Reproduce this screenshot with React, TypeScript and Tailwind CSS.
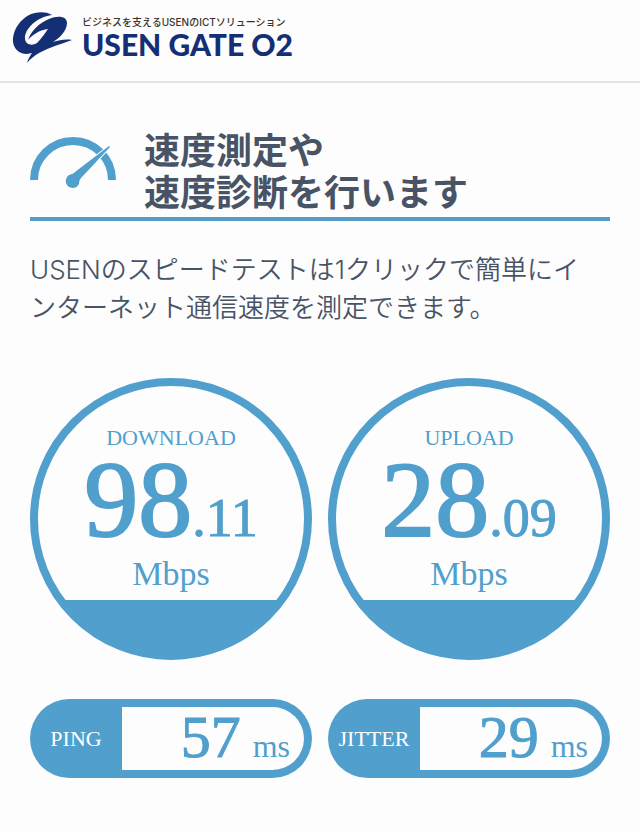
type SpeedDialProps = {
  label: string;
  whole: string;
  decimal: string;
};

type LatencyPillProps = {
  label: string;
  value: string;
};

const Logo: React.FC = () => (
  <a href="#top" className="flex items-start gap-2 text-[#142f75]">
    <svg width="60" height="52" viewBox="0 0 60 52" fill="currentColor" aria-hidden="true">
      <path d="M40 3 C33 -1 24 0 17 3 C8 8 2 17 1 26 C0 35 6 42 15 42 L20 41 C18 44 16 47 15 51 C18 47 22 44 27 41 C38 35 49 32 60 28 C54 27 47 28 41 30 C49 25 55 18 55 11 C55 4 46 3 37 7 C27 11 19 19 16 28 C21 22 28 18 36 17 C33 21 30 26 26 30 C22 34 14 34 13 27 C12 18 24 5 40 3 Z" />
    </svg>
    <span className="flex flex-col pt-1 pl-0.5">
      <span className="font-['Inter','Noto_Sans_CJK_JP',sans-serif] text-[10px] leading-[12px] font-medium text-[#38332f]">
        ビジネスを支えるUSENのICTソリューション
      </span>
      <span className="font-['Lato',sans-serif] text-[30px] leading-[32px] font-black">
        USEN GATE O2
      </span>
    </span>
  </a>
);

const GaugeIcon: React.FC = () => (
  <svg width="86" height="52" viewBox="0 0 86 52" className="shrink-0" aria-hidden="true">
    <path d="M4 43 A39 39 0 0 1 82 43" fill="none" stroke="#509fcd" strokeWidth="8" />
    <path
      d="M80 10 L79 9 L45 35 C43 37 41 37 39 38 A7 7 0 1 0 49 47 C49 44 50 42 51 41 Z"
      fill="#509fcd"
      stroke="#fdfdfd"
      strokeWidth="2"
      paintOrder="stroke"
    />
  </svg>
);

const SpeedDial: React.FC<SpeedDialProps> = ({ label, whole, decimal }) => (
  <div className="flex aspect-square flex-col items-center rounded-full border-8 border-[#509fcd] bg-[linear-gradient(to_top,#509fcd_60px,#fdfdfd_60px)] bg-origin-border pt-10 text-[#509fcd]">
    <p className="text-[22px] leading-[24px]">{label}</p>
    <p className="mt-3 flex items-baseline text-[108px] leading-[76px] [-webkit-text-stroke:2px]">
      {whole}
      <span className="text-[54px] [-webkit-text-stroke:1px]">.{decimal}</span>
    </p>
    <p className="text-[34px] leading-[36px]">Mbps</p>
  </div>
);

const LatencyPill: React.FC<LatencyPillProps> = ({ label, value }) => (
  <div className="flex h-[79px] rounded-full bg-[#509fcd] py-2 pr-2">
    <p className="flex w-[92px] items-center justify-center text-[22px] leading-[24px] text-white">
      {label}
    </p>
    <p className="flex flex-1 items-baseline justify-end gap-3 rounded-r-full bg-[#fdfdfd] pr-3.5 text-[60px] leading-[60px] text-[#509fcd] [-webkit-text-stroke:1px]">
      {value}
      <span className="text-[32px] [-webkit-text-stroke:0px]">ms</span>
    </p>
  </div>
);

const App: React.FC = () => {
  return (
    <div className="min-h-screen bg-[#fdfdfd] text-[#485466]" id="top">
      <header className="flex h-[83px] items-start border-b-2 border-[#dfe6ea] px-3 pt-3">
        <Logo />
      </header>

      <main className="px-[30px] pt-11 pb-12">
        <div className="flex gap-7 border-b-4 border-[#549dc5] pb-1.5">
          <div className="pt-2.5">
            <GaugeIcon />
          </div>
          <h1 className="font-['Noto_Sans_CJK_JP',sans-serif] text-[36px] leading-[42px] font-bold">
            速度測定や
            <br />
            速度診断を行います
          </h1>
        </div>

        <p className="mt-[30px] pr-4 font-['Inter','Noto_Sans_CJK_JP',sans-serif] text-[26px] leading-[38px] font-[350]">
          USENのスピードテストは1クリックで簡単にインターネット通信速度を測定できます。
        </p>

        <section className="mt-[51px] grid grid-cols-2 gap-x-4 gap-y-[39px] font-['Liberation_Serif',serif]">
          <SpeedDial label="DOWNLOAD" whole="98" decimal="11" />
          <SpeedDial label="UPLOAD" whole="28" decimal="09" />
          <LatencyPill label="PING" value="57" />
          <LatencyPill label="JITTER" value="29" />
        </section>
      </main>
    </div>
  );
};

export default App;
